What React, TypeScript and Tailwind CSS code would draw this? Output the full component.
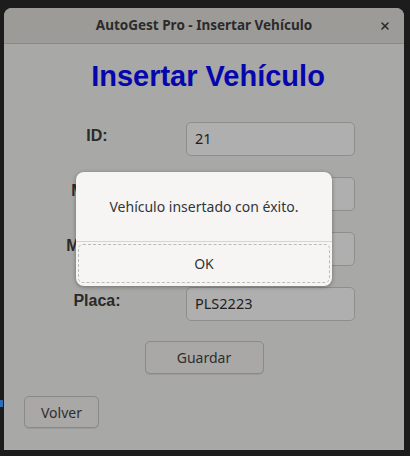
import { X } from "lucide-react";

const ui = { fontFamily: '"Noto Sans", "Open Sans", sans-serif' };
const arial = { fontFamily: '"Liberation Sans", Arial, sans-serif' };

interface Row {
  label: string;
  value: string;
}

const rows: Row[] = [
  { label: "ID:", value: "21" },
  { label: "Marca:", value: "Toyota" },
  { label: "Modelo:", value: "Corolla" },
  { label: "Placa:", value: "PLS2223" },
];

export default function App() {
  return (
    <div className="relative w-[410px] h-[456px] bg-[#1c1c1c] overflow-hidden" style={ui}>
      {/* bits of the desktop behind the window */}
      <div className="absolute left-0 top-[400px] w-[3px] h-[7px] bg-[#2f6db5]" />

      <div className="absolute left-[4px] top-[8px] w-[400px] h-[442px] rounded-t-[8px] overflow-hidden bg-[#a8a8a7] flex flex-col">
        {/* Title bar */}
        <div className="relative h-[36px] shrink-0 bg-[#9d9b98] border-b border-[#8a8885] flex items-center justify-center">
          <span className="text-[13.5px] font-bold text-[#2b2b2b]">
            AutoGest Pro - Insertar Vehículo
          </span>
          <X className="absolute right-[13px] top-[12px] h-[12px] w-[12px] text-[#2b2b2b]" strokeWidth={3.2} />
        </div>

        {/* Body */}
        <div className="flex flex-col">
          <h1
            className="mt-[15px] pl-[8px] text-center text-[29px] leading-[34px] font-bold text-[#0606ad]"
            style={arial}
          >
            Insertar Vehículo
          </h1>

          <div className="mt-[29px] ml-[20px] grid grid-cols-[146px_169px] gap-x-[16px] gap-y-[21px]">
            {rows.map((r) => (
              <div key={r.label} className="contents">
                <div
                  className="h-[34px] flex items-center justify-center pb-[6px] text-[16px] font-bold text-[#2a2a2a]"
                  style={arial}
                >
                  {r.label}
                </div>
                <div className="h-[34px] rounded-[5px] border border-[#8f8e8c] bg-[#afafaf] flex items-center px-[8px] text-[14.5px] text-[#1e1e1e]">
                  {r.value}
                </div>
              </div>
            ))}
          </div>

          <div className="mt-[20px] flex justify-center">
            <button className="w-[119px] h-[33px] rounded-[5px] border border-[#8c8a87] bg-[#a9a8a6] text-[14px] text-[#2e2e2e] shadow-[0_1px_0_rgba(0,0,0,0.08)]">
              Guardar
            </button>
          </div>

          <div className="mt-[22px] ml-[20px]">
            <button className="w-[75px] h-[32px] rounded-[5px] border border-[#8c8a87] bg-[#a9a8a6] text-[14px] text-[#2e2e2e] shadow-[0_1px_0_rgba(0,0,0,0.08)]">
              Volver
            </button>
          </div>
        </div>
      </div>

      {/* Message dialog */}
      <div className="absolute left-[76px] top-[172px] w-[256px] h-[114px] rounded-[8px] bg-[#f6f5f4] shadow-[0_1px_4px_rgba(0,0,0,0.35)] flex flex-col overflow-hidden">
        <div className="h-[69px] flex items-center justify-center text-[14px] text-[#333638]">
          Vehículo insertado con éxito.
        </div>
        <div className="h-px bg-[#d6d4d1]" />
        <div className="flex-1 p-[2px] pb-[3px]">
          <div className="h-full rounded-[5px] border border-dashed border-[#bdbbb8] flex items-center justify-center text-[14px] text-[#333638]">
            OK
          </div>
        </div>
      </div>
    </div>
  );
}
